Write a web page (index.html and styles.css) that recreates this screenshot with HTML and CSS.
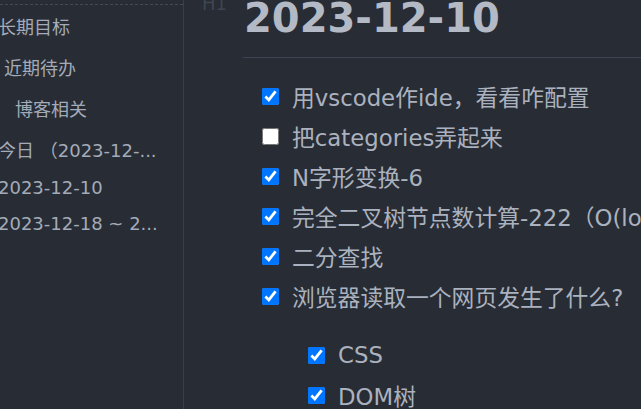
FILE: index.html
```html
<!DOCTYPE html>
<html lang="zh">
<head>
<meta charset="utf-8">
<link rel="stylesheet" href="styles.css">
</head>
<body>
<div class="app">
  <aside class="sidebar">
    <div class="dash"></div>
    <ul class="outline">
      <li class="l1">长期目标</li>
      <li class="l2">近期待办</li>
      <li class="l3">博客相关</li>
      <li class="l1">今日 （2023-12-...</li>
      <li class="l1">2023-12-10</li>
      <li class="l1">2023-12-18 ~ 2...</li>
    </ul>
  </aside>
  <main class="editor">
    <div class="hlabel">H1</div>
    <div class="content">
      <h1 class="title">2023-12-10</h1>
      <ul class="tasks">
        <li><input type="checkbox" checked><span>用vscode作ide，看看咋配置</span></li>
        <li><input type="checkbox"><span>把categories弄起来</span></li>
        <li><input type="checkbox" checked><span>N字形变换-6</span></li>
        <li><input type="checkbox" checked><span>完全二叉树节点数计算-222（O(log n)²）</span></li>
        <li><input type="checkbox" checked><span>二分查找</span></li>
        <li><input type="checkbox" checked><span>浏览器读取一个网页发生了什么?</span></li>
      </ul>
      <ul class="tasks sub">
        <li><input type="checkbox" checked><span>CSS</span></li>
        <li><input type="checkbox" checked><span>DOM树</span></li>
      </ul>
    </div>
  </main>
</div>
</body>
</html>
```
FILE: styles.css
```css
html, body {
  margin: 0;
  padding: 0;
  background: #282c34;
  height: 100%;
  overflow: hidden;
}
body {
  font-family: "DejaVu Sans", "Noto Sans CJK SC", sans-serif;
  color: #abb2bf;
}
.app {
  display: flex;
  height: 409px;
}
.sidebar {
  width: 183px;
  flex: none;
  border-right: 1px solid #3a3f4b;
  background: #282c34;
  overflow: hidden;
}
.dash {
  margin-top: 4px;
  height: 0;
  border-top: 1px dashed #434956;
}
.outline {
  list-style: none;
  margin: 0;
  padding: 1px 0 0 0;
  font-size: 18px;
  color: #a3abb8;
}
.outline li {
  padding: 7px 0 8px 0;
  white-space: nowrap;
}
.outline .l1 { padding-left: 0; margin-left: -2px; }
.outline .l2 { padding-left: 4px; }
.outline .l3 { padding-left: 15px; }
.editor {
  flex: 1;
  display: flex;
  overflow: hidden;
}
.hlabel {
  width: 59px;
  flex: none;
  padding-left: 18px;
  box-sizing: border-box;
  font-size: 18px;
  line-height: 18px;
  color: #3f4552;
  margin-top: -5px;
}
.content {
  flex: 1;
  min-width: 0;
}
.title {
  margin: -5px 0 0 0;
  padding: 0 0 15px 1px;
  font-size: 40px;
  line-height: 47px;
  font-weight: 700;
  color: #b3bac6;
  border-bottom: 1px solid #3e4451;
  white-space: nowrap;
}
.tasks {
  list-style: none;
  margin: 18px 0 0 0;
  padding: 0 0 0 19px;
  font-size: 22.8px;
  white-space: nowrap;
}
.tasks li {
  display: flex;
  align-items: center;
  height: 40px;
}
.tasks input {
  width: 17px;
  height: 17px;
  margin: 0 13px 0 0;
  flex: none;
}
.tasks.sub {
  margin-top: 19px;
  padding-left: 65px;
}
```
